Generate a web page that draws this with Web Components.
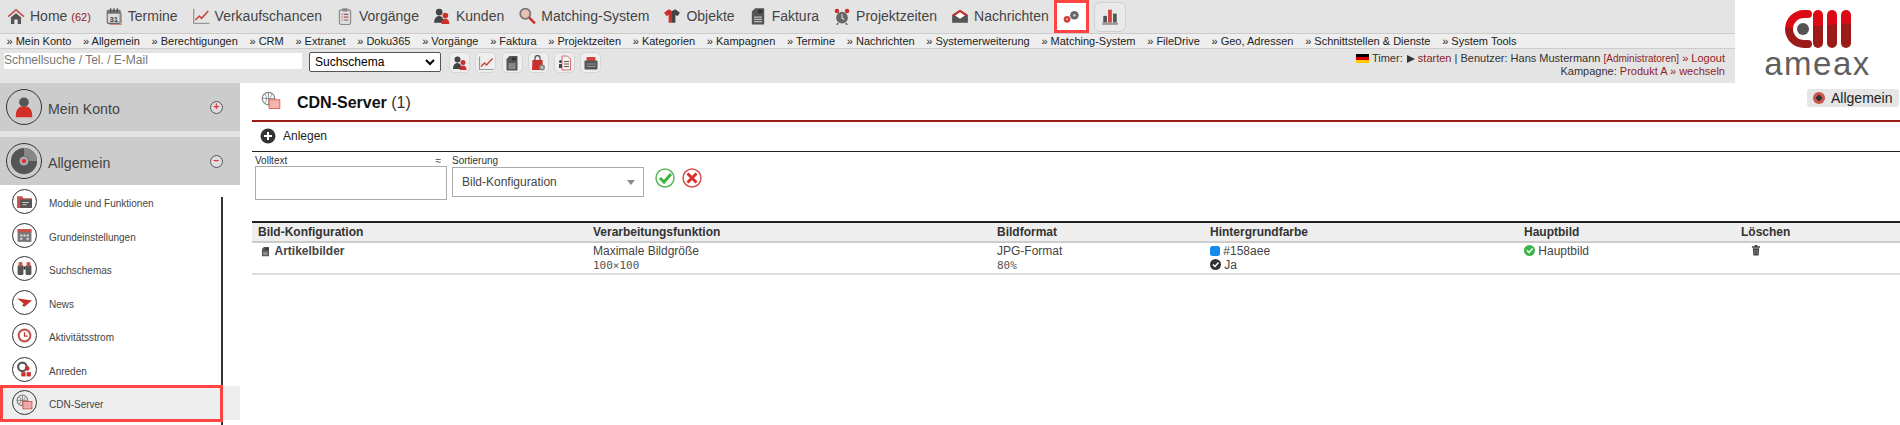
<!DOCTYPE html>
<html lang="de"><head><meta charset="utf-8"><title>CDN-Server</title>
<style>
html,body{margin:0;padding:0;background:#fff;height:425px;overflow:hidden}
body{font-family:"Liberation Sans",Arial,sans-serif;color:#333}
</style></head><body>
<app-shell></app-shell>
<script>
const ic={
home:'<path d="M3.500 9 8 5.500 12.500 9v6H9.500v-4h-3v4h-3z" fill="#555"/><path d="M1 8.500 8 2.500l7 6" fill="none" stroke="#c2554d" stroke-width="1.500"/>',
cal:'<rect x="2" y="3" width="11.500" height="11.500" rx="1" fill="#ddd" stroke="#666"/><rect x="2" y="3" width="11.500" height="3" fill="#777"/><path d="M5 1v4M8 1v4M11 1v4" stroke="#555" stroke-width="1.200"/><path d="M14.500 5v10.500H4" fill="none" stroke="#d08a84"/><text x="7.800" y="13" font-size="7" text-anchor="middle" font-family="Liberation Sans" font-weight="bold" fill="#444">31</text>',
chart:'<path d="M1.500 1.500v13H15.500" fill="none" stroke="#999" stroke-width="1.200"/><path d="M3 11.500 6.500 8l2 2L14.500 3.500" fill="none" stroke="#c9443c" stroke-width="1.400"/>',
clip:'<rect x="3" y="2.500" width="10" height="13" rx="1.500" fill="#ddd" stroke="#888"/><rect x="5.500" y="1" width="5" height="3" rx="1" fill="#888"/><path d="M5 6.500h1M7 6.500h4M5 9h1M7 9h4M5 11.500h1M7 11.500h4" stroke="#a55"/>',
users:'<circle cx="5.500" cy="4.500" r="3" fill="#444"/><path d="M1 14c0-4 2-6 4.500-6s4 2 4 6z" fill="#444"/><circle cx="11" cy="7.500" r="2.500" fill="#c9302c"/><path d="M7.500 15c0-3 1.500-4.500 3.500-4.500s3.500 1.500 3.500 4.500z" fill="#c9302c"/>',
search:'<circle cx="6.500" cy="6" r="4.500" fill="#e8c0b5" stroke="#777" stroke-width="1.600"/><path d="m10 9.500 5 5" stroke="#c9302c" stroke-width="2.200"/>',
shirt:'<path d="M5 2 1 5l2 3 2-1v7h3V3.500z" fill="#c9302c"/><path d="M8 3.500 11 2l4 3-2 3-2-1v7H8z" fill="#444"/>',
doc:'<path d="M5.500 1h8v14.500h-11V4z" fill="#555"/><path d="M4.500 9h7M4.500 11h7M4.500 13h7" stroke="#bbb"/><path d="M8 2.500h4v3H8z" fill="#333"/>',
clock:'<circle cx="8" cy="9.500" r="5.200" fill="#666"/><circle cx="3.500" cy="3.500" r="2" fill="#c9302c"/><circle cx="12.500" cy="3.500" r="2" fill="#c9302c"/><path d="M8 6.500v3.500l2 1" stroke="#ddd" fill="none"/><path d="m4.500 14-1 2M11.500 14l1 2" stroke="#555" stroke-width="1.200"/>',
mail:'<path d="M1 7 8 2.500 15 7v7H1z" fill="#555"/><path d="M3.500 7.500 8 4.500l4.500 3L8 10.500z" fill="#fff"/><path d="M1 7 8 2.500 15 7l-2 1-5-3.500L3 8z" fill="#c9302c"/>',
gears:'<circle cx="4.500" cy="10" r="3" fill="#d2403a"/><circle cx="4.500" cy="10" r="1" fill="#f2b0aa"/><circle cx="11" cy="6.500" r="3.800" fill="#666"/><circle cx="11" cy="6.500" r="1.200" fill="#ccc"/>',
bars:'<rect x="2" y="7" width="3.300" height="6" fill="#555"/><rect x="6.300" y="1.500" width="3.300" height="11.500" fill="#d2403a"/><rect x="10.700" y="5" width="3.300" height="8" fill="#555"/><rect x="1" y="13" width="14" height="2" fill="#999"/>',
bag:'<path d="M2.500 5h10l.5 10H2z" fill="#c9302c"/><path d="M5 5V3a2.500 2.500 0 0 1 5 0v2" fill="none" stroke="#555" stroke-width="1.300"/><circle cx="12" cy="12.500" r="3" fill="#888"/><circle cx="12" cy="12.500" r="1" fill="#eee"/>',
docx:'<path d="M5 1h5.500l3 3v11H5z" fill="#f6f0ee" stroke="#c9544c" stroke-width=".8"/><path d="M7 6.500h5M7 9h5M7 11.500h5" stroke="#555"/><circle cx="3.500" cy="6.500" r="1.500" fill="#444"/><rect x="2" y="9" width="3" height="4" fill="#444"/>',
print:'<rect x="3.500" y="2" width="9" height="4" rx="1" fill="#d2403a"/><rect x="1.500" y="5.500" width="13" height="9" rx="1" fill="#555"/><path d="M3.500 9h9M3.500 11.500h9" stroke="#999"/>'
};
const svg=(n,s=16)=>`<svg width="${s}" height="${s}" viewBox="0 0 16 16" aria-hidden="true">${ic[n]}</svg>`;

class MainMenu extends HTMLElement{constructor(){super();const items=[['home','Home',' <span class="n">(62)</span>'],['cal','Termine'],['chart','Verkaufschancen'],['clip','Vorgänge'],['users','Kunden'],['search','Matching-System'],['shirt','Objekte'],['doc','Faktura'],['clock','Projektzeiten'],['mail','Nachrichten']];
this.attachShadow({mode:'open'}).innerHTML=`<style>
:host{display:flex;align-items:flex-start;height:33px;box-sizing:border-box;padding-left:7px;font-size:14px;color:#444}
a{display:flex;align-items:center;gap:5px;margin-right:14px;white-space:nowrap;height:32px}
.n{font-size:11px;color:#8f1d1d}
.btn{box-sizing:border-box;width:32px;height:30px;margin-top:2px;display:flex;align-items:center;justify-content:center;background:#e9e9e9;border:1px solid #d0d0d0;border-radius:6px}
.on{width:35px;height:33px;margin-top:0;background:#fff;border:3px solid #f44;border-radius:0;margin-right:5px;margin-left:-9px}
</style>${items.map(i=>`<a>${svg(i[0],18)}<span>${i[1]}${i[2]||''}</span></a>`).join('')}<div class="btn on">${svg('gears',18)}</div><div class="btn">${svg('bars',18)}</div>`}}
customElements.define('main-menu',MainMenu);

class SubMenu extends HTMLElement{constructor(){super();const t=['Mein Konto','Allgemein','Berechtigungen','CRM','Extranet','Doku365','Vorgänge','Faktura','Projektzeiten','Kategorien','Kampagnen','Termine','Nachrichten','Systemerweiterung','Matching-System','FileDrive','Geo, Adressen','Schnittstellen &amp; Dienste','System Tools'];
this.attachShadow({mode:'open'}).innerHTML=`<style>
:host{display:flex;align-items:center;gap:11.700px;height:16px;box-sizing:border-box;background:#eee;border-top:1px solid #ccc;border-bottom:1px solid #ccc;padding-left:6.500px;font-size:11px;color:#222;white-space:nowrap}
</style>${t.map(x=>`<span>» ${x}</span>`).join('')}`}}
customElements.define('sub-menu',SubMenu);

class ToolBar extends HTMLElement{constructor(){super();
this.attachShadow({mode:'open'}).innerHTML=`<style>
:host{display:flex;height:34px;box-sizing:border-box;padding:3px 10px 0 4px;font-size:11px;color:#333}
.q{box-sizing:border-box;width:298px;height:16px;margin-top:1px;background:#fff;font-size:12px;color:#777;line-height:15px;white-space:nowrap;overflow:hidden;display:block}
.sel{box-sizing:border-box;width:132px;height:20px;margin-left:7px;background:#fff;border:1px solid #555;border-radius:2px;color:#000;font-size:12px;display:flex;align-items:center;justify-content:space-between;padding:0 5px 0 5px}
.ics{display:flex;gap:5.300px;margin-left:8px}
.i{box-sizing:border-box;width:21px;height:21px;background:#eee;border:1px solid #d6d6d6;border-radius:5px;display:flex;align-items:center;justify-content:center}
.r{margin-left:auto;text-align:right;line-height:12px;white-space:nowrap}
.r b{font-weight:normal;color:#8f1d1d}.r small{font-size:10px;color:#8f1d1d}
.flag{display:inline-block;width:13px;height:9px;background:linear-gradient(#000 33%,#d00 33% 66%,#fc0 66%);vertical-align:-1px}
.pl{display:inline-block;border-left:8px solid #333;border-top:4.500px solid transparent;border-bottom:4.500px solid transparent;vertical-align:-1px;margin-left:1px}
</style><div class="q">Schnellsuche / Tel. / E-Mail</div>
<div class="sel">Suchschema<svg width="10" height="7" viewBox="0 0 10 7"><path d="m1 1 4 4 4-4" fill="none" stroke="#000" stroke-width="2"/></svg></div>
<div class="ics">${['users','chart','doc','bag','docx','print'].map(n=>`<div class="i">${svg(n,16)}</div>`).join('')}</div>
<div class="r"><span class="flag"></span> Timer: <span class="pl"></span> <b>starten</b> | Benutzer: Hans Mustermann <small>[Administratoren]</small> <b>» Logout</b><br>Kampagne: <b>Produkt A » wechseln</b></div>`}}
customElements.define('tool-bar',ToolBar);

class AmeaxLogo extends HTMLElement{constructor(){super();
this.attachShadow({mode:'open'}).innerHTML=`<style>
:host{display:block;width:165px;height:83px;text-align:center;box-sizing:border-box;padding-top:10px}
svg{display:block;margin:0 auto}
.t{font:33px/17px "Liberation Sans",sans-serif;color:#5f5f5f;letter-spacing:1.500px;margin-top:7px;height:17px}
</style><svg width="66" height="38" viewBox="0 0 66 38"><defs><linearGradient id="g" gradientUnits="userSpaceOnUse" x1="0" y1="0" x2="3" y2="38"><stop offset=".48" stop-color="#dc0a14"/><stop offset=".48" stop-color="#9c1a18"/></linearGradient></defs>
<path d="M19 0A19 19 0 0 0 19 38h4a4 4 0 0 0 0-8h-4a11 11 0 0 1 0-22h4a4 4 0 0 0 0-8z" fill="url(#g)"/><circle cx="18" cy="19" r="6" fill="#555"/><rect x="28" y="0" width="10" height="38" rx="5" fill="url(#g)"/><rect x="42" y="0" width="10" height="38" rx="5" fill="url(#g)"/><rect x="56" y="0" width="10" height="38" rx="5" fill="url(#g)"/></svg><div class="t">ameax</div>`}}
customElements.define('ameax-logo',AmeaxLogo);

class SideHead extends HTMLElement{constructor(){super();const open=this.hasAttribute('open');
this.attachShadow({mode:'open'}).innerHTML=`<style>
:host{display:flex;align-items:center;height:48px;background:#ccc;padding-left:6px;font-size:14.200px;color:#444;box-sizing:border-box}
.c{box-sizing:border-box;width:36px;height:36px;border:1.500px solid #333;border-radius:50%;display:flex;align-items:center;justify-content:center;margin-right:6px}
.t{flex:1;padding-top:4px}
.s{margin-right:17px;width:11px;height:11px;border-radius:50%;border:1.500px solid #555;background:#ddd;display:flex;align-items:center;justify-content:center;color:#d33;font:bold 10px/1 "Liberation Sans"}
</style><div class="c"><slot name="i"></slot></div><div class="t"><slot></slot></div><div class="s">${open?'−':'+'}</div>`}}
customElements.define('side-head',SideHead);

class SideItem extends HTMLElement{constructor(){super();
this.attachShadow({mode:'open'}).innerHTML=`<style>
:host{display:flex;align-items:center;height:33.500px;padding-left:12px;font-size:10px;color:#444;box-sizing:border-box}
:host([on]){background:#eee}
.c{box-sizing:border-box;width:25px;height:25px;border:1px solid #333;border-radius:50%;display:flex;align-items:center;justify-content:center;margin-right:12px;background:#fff}
:host([on]) .c{background:#eee}
.t{padding-top:4px}
</style><div class="c"><slot name="i"></slot></div><div class="t"><slot></slot></div>`}}
customElements.define('side-item',SideItem);

class SideBar extends HTMLElement{constructor(){super();
this.attachShadow({mode:'open'}).innerHTML=`<style>
:host{display:flex;flex-direction:column;width:240px;background:#fff;position:relative;height:342px;flex:none}
.gap{height:6px;background:#e4e4e4}
.list{position:relative}
.v{position:absolute;left:221px;top:12px;bottom:-60px;width:2px;background:#333}
.box{position:absolute;left:0;top:200px;width:223px;height:37px;border:3px solid #f44;box-sizing:border-box;pointer-events:none}
svg{display:block}
</style><side-head><svg slot="i" width="22" height="24" viewBox="0 0 16 17"><circle cx="8" cy="5" r="3.500" fill="#555"/><path d="M2 16c0-6 2-8 6-8s6 2 6 8z" fill="#d22f27"/></svg>Mein Konto</side-head><div class="gap"></div>
<side-head open><svg slot="i" width="28" height="28" viewBox="0 0 16 16"><circle cx="8" cy="8" r="7.500" fill="#555"/><path d="M8 .5a7.500 7.500 0 0 1 7.500 7.500h-4.500a3 3 0 0 0-3-3z" fill="#888"/><circle cx="8" cy="8" r="2.600" fill="#aaa"/><circle cx="8" cy="8" r="1.200" fill="#e22"/></svg>Allgemein</side-head>
<div class="list"><div class="v"></div>
${[['Module und Funktionen','<path d="M1 3h5l1 2h8v9H1z" fill="#c9544c"/><rect x="4" y="6" width="11" height="8" fill="#555"/><path d="M6 9h6M6 11h4" stroke="#ccc"/>'],
['Grundeinstellungen','<rect x="1.500" y="2" width="13" height="12" fill="#777"/><rect x="1.500" y="2" width="13" height="3" fill="#c9544c"/><path d="M4 7h2v2H4zM7 7h2v2H7zM10 7h2v2h-2zM4 10h2v2H4zM10 10h2v2h-2z" fill="#ddd"/>'],
['Suchschemas','<rect x="1.500" y="5" width="5.500" height="9" rx="1" fill="#555"/><rect x="9" y="5" width="5.500" height="9" rx="1" fill="#555"/><rect x="2.500" y="2" width="3.500" height="4" fill="#c9544c"/><rect x="10" y="2" width="3.500" height="4" fill="#c9544c"/><rect x="7" y="6" width="2" height="3" fill="#333"/>'],
['News','<path d="M1 4 15 6 8 12 7 9z" fill="#c9302c"/><path d="m7 9 1 3-2-1z" fill="#444"/>'],
['Aktivitätsstrom','<circle cx="8" cy="8" r="6.500" fill="#c9544c"/><circle cx="8" cy="8" r="4.500" fill="#fff"/><path d="M8 5v3.500h3" stroke="#c9302c" fill="none" stroke-width="1.200"/>'],
['Anreden','<circle cx="6" cy="5.500" r="4" fill="none" stroke="#555" stroke-width="2"/><circle cx="10.500" cy="7" r="2.200" fill="#c9302c"/><rect x="5" y="10.500" width="4" height="4" fill="#c9302c"/><rect x="10" y="10.500" width="4" height="4" fill="#c9302c"/>'],
['CDN-Server','<circle cx="6" cy="6" r="5" fill="none" stroke="#777"/><path d="M1 6h10M6 1v10M3 2.500c2 2 2 5 0 7M9 2.500c-2 2-2 5 0 7" stroke="#777" fill="none" stroke-width=".8"/><rect x="6.500" y="7" width="8.500" height="7" fill="#eaa" stroke="#c9544c" stroke-width=".8"/>']].map((x,i)=>`<side-item ${i==6?'on':''}><svg slot="i" width="17" height="17" viewBox="0 0 16 16">${x[1]}</svg>${x[0]}</side-item>`).join('')}
<div class="box"></div></div>`}}
customElements.define('side-bar',SideBar);

class CdnPage extends HTMLElement{constructor(){super();
const cols='335px 404px 213px 314px 217px 1fr';
this.attachShadow({mode:'open'}).innerHTML=`<style>
:host{display:block;flex:1;position:relative;padding:2px 0 0 12px;min-width:0;color:#333}
.tag{position:absolute;right:1px;top:6px;box-sizing:border-box;width:92px;height:18px;background:#e6e6e6;border-radius:3px;font-size:14px;color:#222;display:flex;align-items:center;gap:6px;padding-left:6px}
.dot{width:12px;height:12px;border-radius:50%;background:radial-gradient(#333 30%,#c9544c 35%)}
.head{height:37px;display:flex;align-items:center;padding-left:9px;font-size:16px;color:#111;box-sizing:border-box;border-bottom:2px solid #9c1a18}
.head svg{margin-right:16px;position:relative;top:-2px}
.head span{font-weight:normal;color:#333}
.add{height:30px;display:flex;align-items:center;gap:7px;padding:0 0 2px 8px;font-size:12px;color:#222;border-bottom:1px solid #222;box-sizing:border-box}
.filter{display:flex;height:69px;box-sizing:border-box;padding:4px 0 0 3px;align-items:flex-start}
.f{font-size:10px;color:#333;line-height:10px}
.lab{height:10px;display:flex;justify-content:space-between;padding-right:6px}
.inp{box-sizing:border-box;width:192px;height:34px;border:1px solid #aaa;background:#fff}
.s2{box-sizing:border-box;width:192px;height:30px;border:1px solid #aaa;margin-top:1px;font-size:12px;display:flex;align-items:center;justify-content:space-between;padding:0 8px 0 9px;color:#444}
.tri{border-top:5px solid #888;border-left:4.500px solid transparent;border-right:4.500px solid transparent}
.btns{display:flex;gap:7px;margin:12px 0 0 11px}
.tbl{border-top:2px solid #222}
.row{display:grid;grid-template-columns:${cols};padding-left:6px}
.th{background:#eee;height:20px;align-items:center;font-size:12px;font-weight:bold;color:#333;border-bottom:2px solid #ccc;box-sizing:border-box}
.tr{height:30px;font-size:12px;line-height:14px;border-bottom:2px solid #ddd;color:#444}
.tr>div{padding-top:1px}
.m{font:11px/14px "DejaVu Sans Mono","Liberation Mono",monospace;color:#555;margin-top:1px}
.tr>.b{font-weight:bold;color:#444;display:flex;gap:4.500px;align-items:center;padding:1px 0 0 3px;height:14px}
.sq{display:inline-block;width:10px;height:10px;border-radius:2.500px;background:#158aee;vertical-align:-1px}
svg{display:inline-block}
</style>
<div class="tag"><span class="dot"></span>Allgemein</div>
<div class="head"><svg width="20" height="20" viewBox="0 0 16 16"><circle cx="6" cy="6" r="5" fill="none" stroke="#888"/><path d="M1 6h10M6 1v10M3 2.500c2 2 2 5 0 7M9 2.500c-2 2-2 5 0 7" stroke="#888" fill="none" stroke-width=".7"/><rect x="6.500" y="7" width="8.500" height="7" fill="#f3b5ad" stroke="#d9685f" stroke-width=".8"/></svg><b>CDN-Server</b>&nbsp;<span>(1)</span></div>
<div class="add"><svg width="16" height="16" viewBox="0 0 16 16"><circle cx="8" cy="8" r="7.500" fill="#333"/><path d="M8 4v8M4 8h8" stroke="#fff" stroke-width="2"/></svg><span>Anlegen</span></div>
<div class="filter"><div class="f"><div class="lab"><span>Volltext</span><span>≈</span></div><div class="inp"></div></div>
<div class="f" style="margin-left:5px"><div class="lab">Sortierung</div><div class="s2">Bild-Konfiguration<i class="tri"></i></div></div>
<div class="btns"><svg width="20" height="20" viewBox="0 0 20 20"><circle cx="10" cy="10" r="9" fill="#fff" stroke="#5cb85c" stroke-width="1.500"/><path d="m5 10 4 4 7-8" fill="none" stroke="#3bb53b" stroke-width="3"/></svg><svg width="20" height="20" viewBox="0 0 20 20"><circle cx="10" cy="10" r="9" fill="#fff" stroke="#d9534f" stroke-width="1.500"/><path d="m5.500 5.500 9 9M14.500 5.500l-9 9" stroke="#d9302c" stroke-width="3"/></svg></div></div>
<div class="tbl"><div class="row th"><div>Bild-Konfiguration</div><div>Verarbeitungsfunktion</div><div>Bildformat</div><div>Hintergrundfarbe</div><div>Hauptbild</div><div>Löschen</div></div>
<div class="row tr"><div class="b"><svg width="9" height="11" viewBox="1 0 14 16">${ic.doc}</svg><span>Artikelbilder</span></div><div>Maximale Bildgröße<div class="m">100×100</div></div><div>JPG-Format<div class="m">80%</div></div><div><i class="sq"></i> #158aee<br><svg width="11" height="11" viewBox="0 0 11 11" style="vertical-align:-1px"><circle cx="5.500" cy="5.500" r="5.500" fill="#333"/><path d="m3 5.500 2 2 3.500-4" stroke="#fff" stroke-width="1.500" fill="none"/></svg> Ja</div><div><svg width="11" height="11" viewBox="0 0 11 11" style="vertical-align:-1px"><circle cx="5.500" cy="5.500" r="5.500" fill="#3cb54a"/><path d="m3 5.500 2 2 3.500-4" stroke="#fff" stroke-width="1.500" fill="none"/></svg> Hauptbild</div><div style="padding-left:9.500px"><svg width="10" height="12" viewBox="0 0 11 12"><path d="M1 2h9v1.500H1zM4 .5h3V2H4zM2 4h7l-.6 8H2.600z" fill="#444"/><path d="M4 5.500v5M5.500 5.500v5M7 5.500v5" stroke="#aaa" stroke-width=".5"/></svg></div></div></div>`}}
customElements.define('cdn-page',CdnPage);

class AppShell extends HTMLElement{constructor(){super();
this.attachShadow({mode:'open'}).innerHTML=`<style>
:host{display:block;width:1900px;height:425px;overflow:hidden;background:#fff}
.top{display:flex;height:83px}
.l{flex:1;background:#e4e4e4;min-width:0}
.b{display:flex;height:342px}
</style><div class="top"><div class="l"><main-menu></main-menu><sub-menu></sub-menu><tool-bar></tool-bar></div><ameax-logo></ameax-logo></div>
<div class="b"><side-bar></side-bar><cdn-page></cdn-page></div>`}}
customElements.define('app-shell',AppShell);
</script></body></html>
